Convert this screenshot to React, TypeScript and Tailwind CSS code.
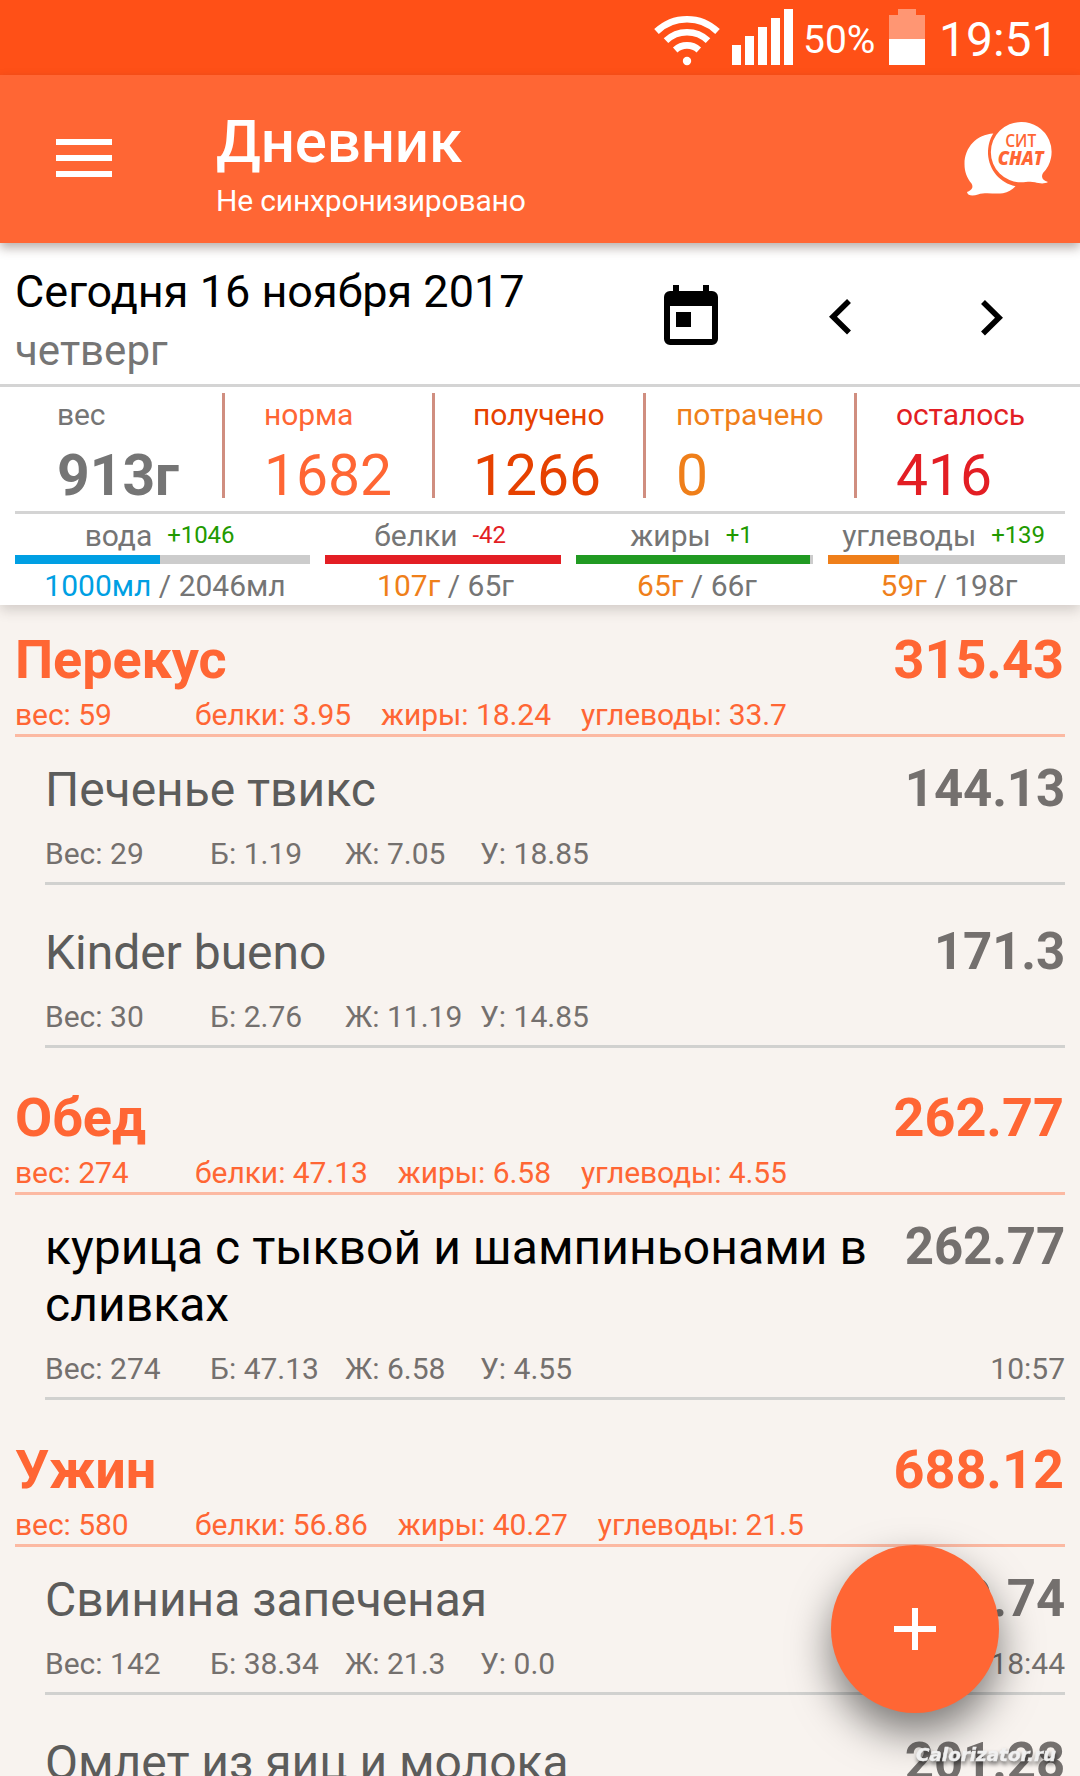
import React from 'react';

type Item = {
  name: string;
  kcal: string;
  weight: string;
  protein: string;
  fat: string;
  carbs: string;
  time?: string;
  dark?: boolean;
};

type Meal = {
  name: string;
  kcal: string;
  weight: string;
  protein: string;
  fat: string;
  carbs: string;
  items: Item[];
};

const meals: Meal[] = [
  {
    name: 'Перекус',
    kcal: '315.43',
    weight: '59',
    protein: '3.95',
    fat: '18.24',
    carbs: '33.7',
    items: [
      { name: 'Печенье твикс', kcal: '144.13', weight: '29', protein: '1.19', fat: '7.05', carbs: '18.85' },
      { name: 'Kinder bueno', kcal: '171.3', weight: '30', protein: '2.76', fat: '11.19', carbs: '14.85' },
    ],
  },
  {
    name: 'Обед',
    kcal: '262.77',
    weight: '274',
    protein: '47.13',
    fat: '6.58',
    carbs: '4.55',
    items: [
      {
        name: 'курица с тыквой и шампиньонами в сливках',
        kcal: '262.77',
        weight: '274',
        protein: '47.13',
        fat: '6.58',
        carbs: '4.55',
        time: '10:57',
        dark: true,
      },
    ],
  },
  {
    name: 'Ужин',
    kcal: '688.12',
    weight: '580',
    protein: '56.86',
    fat: '40.27',
    carbs: '21.5',
    items: [
      { name: 'Свинина запеченая', kcal: '369.74', weight: '142', protein: '38.34', fat: '21.3', carbs: '0.0', time: '18:44' },
      { name: 'Омлет из яиц и молока', kcal: '201.28', weight: '150', protein: '12.4', fat: '15.2', carbs: '3.1' },
    ],
  },
];

const totals = [
  { label: 'вес', value: '913г', className: 'w-[210px] pl-[42px] text-[#757575]', bold: true },
  { label: 'норма', value: '1682', className: 'w-[210px] pl-[39px] text-[#ff6634]' },
  { label: 'получено', value: '1266', className: 'w-[211px] pl-[38px] text-[#e64100]' },
  { label: 'потрачено', value: '0', className: 'w-[211px] pl-[30px] text-[#ef7f1a]' },
  { label: 'осталось', value: '416', className: 'flex-1 pl-[39px] text-[#e31e24]' },
];

const nutrients = [
  { label: 'вода', diff: '+1046', value: '1000мл', norm: '2046мл', width: 'w-[295px]', percent: 49, bar: 'bg-[#009fe3]', text: 'text-[#009fe3]', diffText: 'text-[#219a00]' },
  { label: 'белки', diff: '-42', value: '107г', norm: '65г', width: 'w-[236px]', percent: 100, bar: 'bg-[#e31e24]', text: 'text-[#ef7f1a]', diffText: 'text-[#e31e24]' },
  { label: 'жиры', diff: '+1', value: '65г', norm: '66г', width: 'w-[237px]', percent: 98.7, bar: 'bg-[#219a22]', text: 'text-[#ef7f1a]', diffText: 'text-[#219a00]' },
  { label: 'углеводы', diff: '+139', value: '59г', norm: '198г', width: 'w-[237px]', percent: 30, bar: 'bg-[#ef7f1a]', text: 'text-[#ef7f1a]', diffText: 'text-[#219a00]' },
];

const StatusBar: React.FC = () => (
  <div className="flex h-[75px] bg-[#ff5017] text-white">
    <svg className="ml-[654px] mt-[14px] h-[52px] w-[66px]" viewBox="0 0 66 52" fill="none" stroke="white" strokeWidth="6.6">
      <path d="M2.5 17.5A44 44 0 0 1 63.5 17.5" />
      <path d="M12 26.7A30.5 30.5 0 0 1 54 26.7" />
      <path d="M21.2 36A17.5 17.5 0 0 1 44.8 36" />
      <circle cx="33" cy="47" r="4.2" fill="white" stroke="none" />
    </svg>
    <div className="ml-3 mt-[9px] flex h-14 items-end gap-1">
      <div className="h-5 w-[9px] bg-white" />
      <div className="h-[29px] w-[9px] bg-white" />
      <div className="h-[38px] w-[9px] bg-white" />
      <div className="h-[47px] w-[9px] bg-white" />
      <div className="h-14 w-[9px] bg-white" />
    </div>
    <div className="ml-[10px] w-[86px] pt-[17px] text-[39px] leading-[46px]">50%</div>
    <div className="mt-[9px] flex w-9 flex-col items-center">
      <div className="h-1.5 w-[18px] bg-[#ff9673]" />
      <div className="h-6 w-9 bg-[#ff9673]" />
      <div className="h-[26px] w-9 bg-white" />
    </div>
    <div className="ml-[14px] pt-[11px] text-[48px] leading-[57px]">19:51</div>
  </div>
);

const Header: React.FC = () => (
  <header className="relative z-10 flex h-[168px] bg-[#ff6634] text-white shadow-[0_5px_10px_rgba(60,40,30,0.36)]">
    <div className="ml-14 mt-16 flex h-[38px] w-14 flex-col justify-between">
      <div className="h-1.5 bg-white" />
      <div className="h-1.5 bg-white" />
      <div className="h-1.5 bg-white" />
    </div>
    <div className="ml-[104px] flex-1 pt-[31px] tracking-[-0.17px]">
      <h1 className="text-[60px] leading-[71px] font-medium">Дневник</h1>
      <p className="mt-[6px] text-[30px] leading-[35px]">Не синхронизировано</p>
    </div>
    <svg className="mr-[28px] mt-[46px] h-[76px] w-[88px]" viewBox="0 0 88 76">
      <path
        fill="white"
        d="M29.300 12.500C13 13.500 .5 26 .5 43c0 8 2.500 14 7 19.500 2 3.500 1 6.500-4.500 8.500C3.500 75 9 75 14 73.500c8-2.500 17 0 25-1.300 5-1 9-3.500 12.500-7C36 62 25 49 24 33c0-8 1.500-14.500 5.300-20.500z"
      />
      <path
        fill="white"
        d="M57 1A30 30 0 1 0 57 61.300c5 0 9-1.500 14 0 4 1 9 2 13-.3-5-1.500-7.500-4.500-5-9A30 30 0 0 0 57 1z"
      />
      <text x="56.700" y="25.700" textAnchor="middle" fontSize="17.500" fontWeight="600" fill="#ff6634" fontFamily="'Open Sans', sans-serif" textLength="31" lengthAdjust="spacingAndGlyphs">СИТ</text>
      <text x="56.700" y="43.500" textAnchor="middle" fontSize="19" fontWeight="800" fontStyle="italic" fill="#ff6634" fontFamily="'Open Sans', sans-serif" textLength="46" lengthAdjust="spacingAndGlyphs">CHAT</text>
    </svg>
  </header>
);

const DateBar: React.FC = () => (
  <div className="flex h-[144px] border-b-[3px] border-[#d4d4d4]">
    <div className="w-[664px] pl-[15px] pt-[22px]">
      <div className="text-[45px] leading-[53px] text-black">Сегодня 16 ноября 2017</div>
      <div className="mt-[8px] text-[42px] leading-[49px] text-[#757575]">четверг</div>
    </div>
    <svg className="mt-[42px] h-[60px] w-[54px]" viewBox="0 0 54 60">
      <path
        fillRule="evenodd"
        d="M9 0h6v6h24V0h6v6h3a6 6 0 0 1 6 6v42a6 6 0 0 1-6 6H6a6 6 0 0 1-6-6V12a6 6 0 0 1 6-6h3zM6 21v33h42V21z"
      />
      <path d="M12 27h15v15H12z" />
    </svg>
    <svg className="ml-[111px] mt-[55px] h-[38px] w-[23px]" viewBox="0 0 23 38" fill="none" stroke="black" strokeWidth="5.600">
      <path d="M20 3L4 18.700 20 34.500" />
    </svg>
    <svg className="ml-[128px] mt-[56px] h-[38px] w-[23px]" viewBox="0 0 23 38" fill="none" stroke="black" strokeWidth="5.600">
      <path d="M3 3l16 15.700L3 34.500" />
    </svg>
  </div>
);

const Totals: React.FC = () => (
  <div className="mx-[15px] border-b-[3px] border-[#d4d4d4] pt-1.5 pb-[13px]">
    <div className="flex h-[105px] divide-x-[3px] divide-[#d08e80]">
      {totals.map((total) => (
        <div key={total.label} className={total.className}>
          <div className="pt-1 text-[30px] leading-[36px] tracking-[-0.1px]">{total.label}</div>
          <div className={`mt-[9px] text-[57px] leading-[67px] ${total.bold ? 'font-bold' : ''}`}>{total.value}</div>
        </div>
      ))}
    </div>
  </div>
);

const Nutrients: React.FC = () => (
  <div className="flex h-[91px] justify-between px-[15px]">
    {nutrients.map((n) => (
      <div key={n.label} className={`${n.width} whitespace-nowrap`}>
        <div className="flex h-[39px] items-start justify-center pt-[4px] pr-1.5">
          <span className="text-[30px] leading-[35px] text-[#757575]">{n.label}</span>
          <span className={`ml-[15px] text-[24px] leading-[35px] tracking-[-0.1px] ${n.diffText}`}>{n.diff}</span>
        </div>
        <div className="mt-[2px] h-[9px] bg-[#cccccc]">
          <div className={`h-full ${n.bar}`} style={{ width: `${n.percent}%` }} />
        </div>
        <div className="mt-[4px] pl-[5px] text-center text-[30px] leading-[35px] text-[#757575]">
          <span className={n.text}>{n.value}</span> / {n.norm}
        </div>
      </div>
    ))}
  </div>
);

const ItemRow: React.FC<{ item: Item; first: boolean }> = ({ item, first }) => (
  <div className={`ml-[30px] border-b-[3px] border-[#d1d1cf] pt-6 pb-[11px] text-[#74706e] ${first ? '' : 'mt-[15px]'}`}>
    <div className="flex items-start justify-between">
      <div className={`w-[830px] text-[48px] leading-[57px] ${item.dark ? 'tracking-[0.04px] text-black' : 'tracking-[-0.04px] text-[#5c5c5b]'}`}>
        {item.name}
      </div>
      <div className="text-[51px] leading-[55px] font-bold tracking-[-0.15px]">{item.kcal}</div>
    </div>
    <div className="mt-[18px] flex text-[30px] leading-[35px]">
      <div className="w-[165px]">Вес: {item.weight}</div>
      <div className="w-[135px]">Б: {item.protein}</div>
      <div className="w-[135px]">Ж: {item.fat}</div>
      <div className="flex-1">У: {item.carbs}</div>
      {item.time && <div>{item.time}</div>}
    </div>
  </div>
);

const MealSection: React.FC<{ meal: Meal }> = ({ meal }) => (
  <section className="mb-[15px] px-[15px]">
    <div className="border-b-[3px] border-[#fcb9a2] pt-[23px] pb-0.5 text-[#ff6634]">
      <div className="flex justify-between text-[54px] leading-[63px] font-bold">
        <div className="tracking-[-0.1px]">{meal.name}</div>
        <div className="pr-px">{meal.kcal}</div>
      </div>
      <div className="mt-1.5 flex text-[30px] leading-[35px] tracking-[-0.05px]">
        <div className="w-[180px]">вес: {meal.weight}</div>
        <div className="mr-[30px]">белки: {meal.protein}</div>
        <div className="mr-[30px]">жиры: {meal.fat}</div>
        <div className="tracking-[-0.1px]">углеводы: {meal.carbs}</div>
      </div>
    </div>
    {meal.items.map((item, i) => (
      <ItemRow key={item.name} item={item} first={i === 0} />
    ))}
  </section>
);

const Watermark: React.FC = () => (
  <svg className="absolute top-[1736px] left-[912px] h-[40px] w-[160px] drop-shadow-[1px_3px_2px_rgba(0,0,0,0.6)]" viewBox="0 0 160 40">
    <text
      x="4"
      y="24.500"
      fontSize="18"
      fontWeight="bold"
      fontStyle="italic"
      fontFamily="'DejaVu Sans', sans-serif"
      fill="#f0f0f0"
      stroke="#f0f0f0"
      strokeWidth="0.4"
      textLength="140"
      lengthAdjust="spacingAndGlyphs"
    >
      Calorizator.ru
    </text>
  </svg>
);

const App: React.FC = () => {
  return (
    <div className="relative h-[1776px] w-[1080px] overflow-hidden bg-[#f8f3ef] font-['Roboto',sans-serif]">
      <StatusBar />
      <Header />
      <div className="relative h-[362px] bg-white shadow-[0_5px_12px_rgba(60,50,45,0.2)]">
        <DateBar />
        <Totals />
        <Nutrients />
      </div>
      {meals.map((meal) => (
        <MealSection key={meal.name} meal={meal} />
      ))}

      <button className="absolute top-[1545px] left-[831px] flex h-[168px] w-[168px] items-center justify-center rounded-full bg-[#ff6634] shadow-[0_20px_42px_rgba(0,0,0,0.5)]">
        <svg className="h-[42px] w-[42px]" viewBox="0 0 42 42" fill="white">
          <path d="M18 0h6v18h18v6H24v18h-6V24H0v-6h18z" />
        </svg>
      </button>
      <Watermark />
    </div>
  );
};

export default App;
